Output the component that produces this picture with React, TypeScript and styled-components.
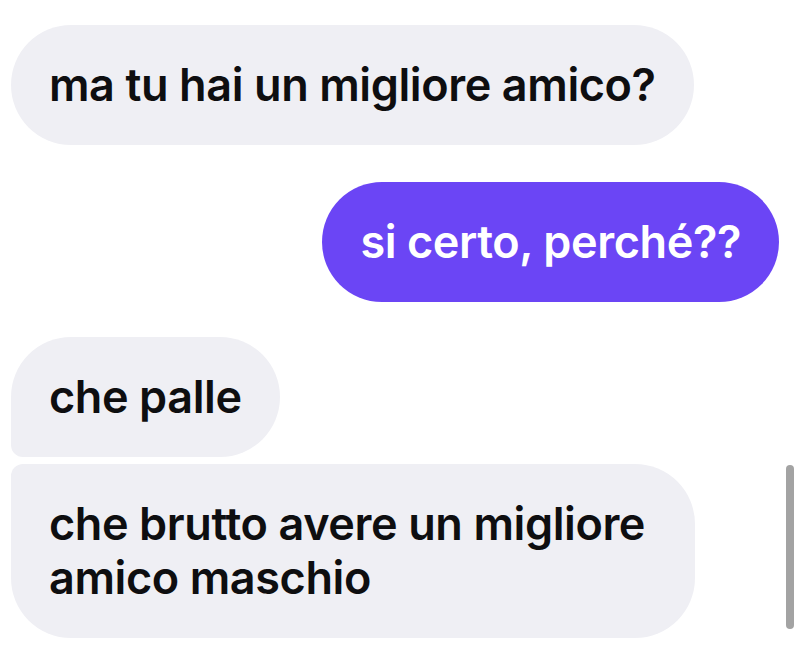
import React from "react";
import styled, { createGlobalStyle, css } from "styled-components";

const Global = createGlobalStyle`
  html, body { margin: 0; padding: 0; background: #ffffff; }
  body { width: 804px; height: 656px; overflow: hidden; }
  * { box-sizing: border-box; }
`;

const Screen = styled.div`
  position: relative;
  width: 804px;
  height: 656px;
  background: #ffffff;
  font-family: Inter, "Liberation Sans", sans-serif;
  padding: 25px 25px 0 11px;
  display: flex;
  flex-direction: column;
`;

const Row = styled.div<{ $out?: boolean; $gap: number }>`
  display: flex;
  justify-content: ${(p) => (p.$out ? "flex-end" : "flex-start")};
  margin-top: ${(p) => p.$gap}px;
`;

type Tail = "none" | "bottom" | "top";

const Bubble = styled.div<{ $out?: boolean; $tail?: Tail }>`
  max-width: 684px;
  padding: 33px 38px;
  border-radius: 60px;
  font-size: 45px;
  line-height: 54px;
  font-weight: 600;
  letter-spacing: -0.4px;
  background: ${(p) => (p.$out ? "#6b45f5" : "#efeff4")};
  color: ${(p) => (p.$out ? "#ffffff" : "#0e0e10")};
  ${(p) =>
    p.$tail === "bottom" &&
    css`
      border-bottom-left-radius: 12px;
    `}
  ${(p) =>
    p.$tail === "top" &&
    css`
      border-top-left-radius: 12px;
    `}
`;

const ScrollThumb = styled.div`
  position: absolute;
  left: 786px;
  top: 465px;
  width: 8px;
  height: 164px;
  border-radius: 4px;
  background: #a3a3a3;
`;

export default function App() {
  return (
    <>
      <Global />
      <Screen>
        <Row $gap={0}>
          <Bubble>ma tu hai un migliore amico?</Bubble>
        </Row>
        <Row $out $gap={37}>
          <Bubble $out>si certo, perché??</Bubble>
        </Row>
        <Row $gap={35}>
          <Bubble $tail="bottom">che palle</Bubble>
        </Row>
        <Row $gap={7}>
          <Bubble $tail="top">che brutto avere un migliore amico maschio</Bubble>
        </Row>
        <ScrollThumb />
      </Screen>
    </>
  );
}
